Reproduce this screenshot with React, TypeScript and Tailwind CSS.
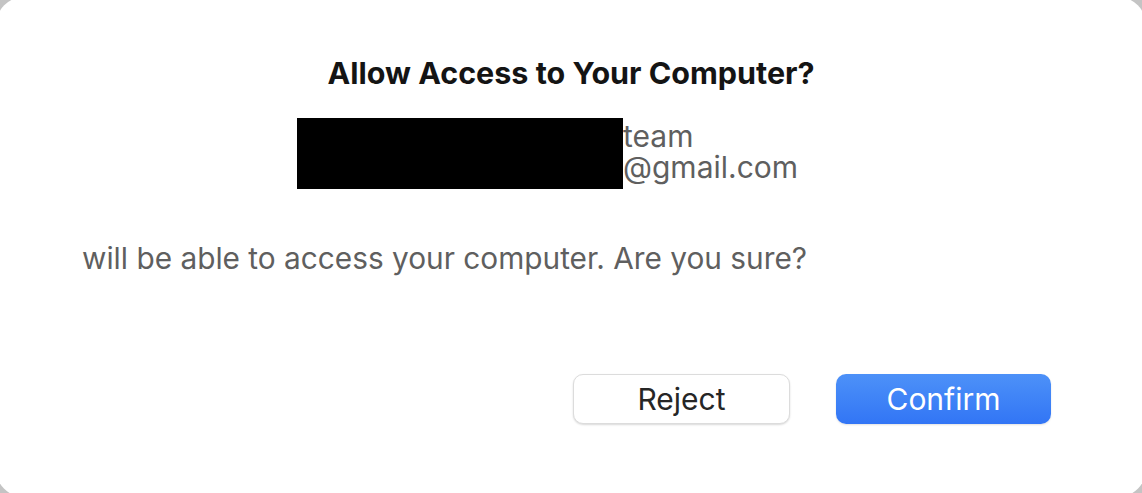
import React from "react";

function App() {
  return (
    <div className="w-[1142px] h-[493px] overflow-hidden bg-[#c4c4c4]">
      <div
        className="ml-[-4px] mt-[-3px] w-[1150px] h-[500px] rounded-[28px] bg-white flex flex-col"
        style={{ fontFamily: "Inter, 'Noto Sans', sans-serif" }}
      >
        <h1 className="mt-[58px] text-center text-[30.5px] font-bold leading-[36px] text-[#141414]">
          Allow Access to Your Computer?
        </h1>

        {/* redacted name + account */}
        <div className="mt-[27px] ml-[301px] flex items-stretch">
          <div className="w-[326px] h-[71px] bg-black" />
          <div className="flex flex-col text-[30px] leading-[31px] text-[#5f5f5f] pt-[3px]">
            <div className="h-[31px]">team</div>
            <div className="h-[31px]">@gmail.com</div>
          </div>
        </div>

        <p className="mt-[51px] ml-[86px] text-[29.8px] leading-[36px] text-[#5f5f5f]">
          will be able to access your computer. Are you sure?
        </p>

        <div className="mt-[98px] flex justify-end gap-[46px] pr-[95px]">
          <button className="w-[217px] h-[50px] rounded-[10px] bg-white border border-[#dcdcdc] shadow-[0_1px_2px_rgba(0,0,0,0.15)] text-[30px] leading-[36px] text-[#262626]">
            Reject
          </button>
          <button className="w-[215px] h-[50px] rounded-[10px] bg-gradient-to-b from-[#4d91f8] to-[#3275f5] shadow-[0_1px_2px_rgba(0,0,0,0.12)] text-[30px] leading-[36px] text-white">
            Confirm
          </button>
        </div>
      </div>
    </div>
  );
}

export default App;
